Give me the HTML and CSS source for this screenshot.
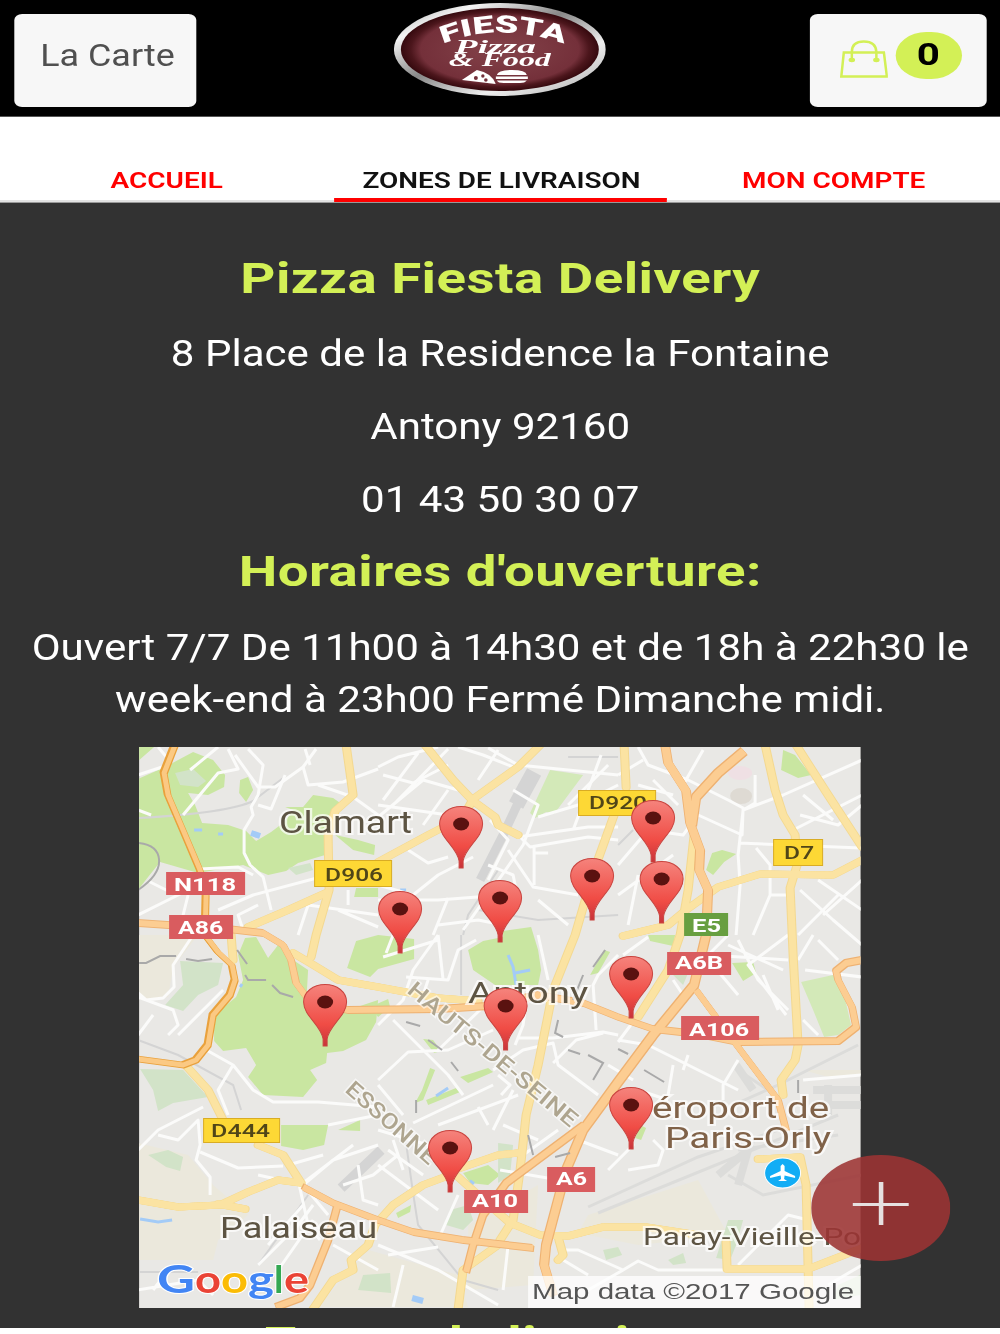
FILE: index.html
```html
<!DOCTYPE html>
<html lang="fr">
<head>
    <meta charset="UTF-8">
    <title>Pizza Fiesta Delivery</title>
    <link rel="stylesheet" href="styles.css">
</head>
<body>
<div class="page">
    <header class="topbar">
        <a class="btn btn-menu"><span>La Carte</span></a>
        <svg class="logo" viewBox="0 0 212 93" preserveAspectRatio="none">
            <defs>
                <linearGradient id="ring" x1="0" y1="0" x2="1" y2="1">
                    <stop offset="0" stop-color="#999"/>
                    <stop offset=".2" stop-color="#f4f4f4"/>
                    <stop offset=".45" stop-color="#888"/>
                    <stop offset=".7" stop-color="#eee"/>
                    <stop offset="1" stop-color="#aaa"/>
                </linearGradient>
                <radialGradient id="wine">
                    <stop offset="0" stop-color="#84434a"/>
                    <stop offset=".8" stop-color="#74303a"/>
                    <stop offset=".9" stop-color="#4c161c"/>
                    <stop offset="1" stop-color="#35090e"/>
                </radialGradient>
                <path id="arc" d="M49 41 Q106 17 176 43"/>
            </defs>
            <ellipse cx="106" cy="46.5" rx="106" ry="46.5" fill="url(#ring)"/>
            <ellipse cx="106" cy="46.5" rx="99" ry="41.5" fill="url(#wine)"/>
            <text class="logo-name"><textPath href="#arc" textLength="124" lengthAdjust="spacingAndGlyphs">FIESTA</textPath></text>
            <text class="logo-script" x="61" y="50" textLength="81" lengthAdjust="spacingAndGlyphs">Pizza</text>
            <text class="logo-script" x="55" y="63" textLength="102" lengthAdjust="spacingAndGlyphs">&amp; Food</text>
            <path d="M68 77 L83 67 Q98 70 102 81 Z" fill="#fff"/>
            <g fill="#74303a"><circle cx="82" cy="75" r="2"/><circle cx="89" cy="73" r="1.7"/><circle cx="92" cy="77" r="1.8"/></g>
            <path d="M103 72 Q104 67 118 67 T133 72 Z M102 73.500 H134 V76 H102 Z M103 77.500 H133 Q131 80 126 80 H110 Q104 80 103 77.500 Z" fill="#fff"/>
        </svg>
        <a class="btn btn-cart">
            <svg class="bag" viewBox="0 0 48 38" preserveAspectRatio="none">
                <path d="M4 12.500 H44 L47 36.500 H1.500 Z"/>
                <path d="M12 19 V12 Q12 1.500 24 1.500 T36.500 12 V19"/>
                <ellipse cx="12" cy="20" rx="2" ry="1"/>
                <ellipse cx="36.500" cy="20" rx="2" ry="1"/>
            </svg>
            <span class="count">0</span>
        </a>
    </header>

    <nav class="tabs">
        <a class="tab">ACCUEIL</a>
        <a class="tab active">ZONES DE LIVRAISON</a>
        <a class="tab">MON COMPTE</a>
    </nav>

    <main class="content">
        <h2>Pizza Fiesta Delivery</h2>
        <p>8 Place de la Residence la Fontaine</p>
        <p>Antony 92160</p>
        <p>01 43 50 30 07</p>
        <h2 class="hours">Horaires d'ouverture:</h2>
        <p>Ouvert 7/7 De 11h00 à 14h30 et de 18h à 22h30 le<br>week-end à 23h00 Fermé Dimanche midi.</p>

        <svg class="map" viewBox="1 2 722 561" preserveAspectRatio="none">
            <defs>
                <linearGradient id="red" x1="0" y1="0" x2="0" y2="1">
                    <stop offset="0" stop-color="#f5837c"/>
                    <stop offset=".65" stop-color="#f04c45"/>
                    <stop offset="1" stop-color="#c8333a"/>
                </linearGradient>
                <g id="pin">
                    <path d="M-2 62 V55 C-4 41 -21.500 32 -21.500 18 C-21.500 8 -12 .5 0 .5 S21.500 8 21.500 18 C21.500 32 4 41 2 55 V62 Z" fill="url(#red)" stroke="#c9443f"/>
                    <ellipse cx="0" cy="18" rx="8" ry="6.500" fill="#5a1210"/>
                </g>
            </defs>
            <rect width="724" height="564" fill="#e9e8e5"/>

            <!-- fields -->
            <g fill="#ebe8dc">
                <path d="M0 190 H60 L35 222 L30 252 L0 255 Z M0 398 L50 410 L75 440 L110 470 L80 495 L75 515 L0 515 Z"/>
                <path d="M180 562 L230 505 L320 530 L330 562 Z M330 480 L400 440 L395 540 L330 545 Z M450 470 L560 435 L590 490 L500 500 L440 488 Z M665 325 H724 V330 L690 332 Z"/>
            </g>

            <!-- woods and parks -->
            <g fill="#c9e6a1">
                <path d="M0 34 L27 22 L40 15 L55 7 L75 15 L87 30 L86 42 L70 50 L50 48 L57 60 L64 78 L90 80 L108 86 L118 96 L133 87 L145 78 L155 65 L147 62 L165 62 L175 50 L195 53 L205 60 L190 85 L187 110 L160 118 L148 126 L130 130 L105 120 L60 128 L22 117 L10 132 L0 145 Z"/>
                <path d="M0 2 H16 L0 16 Z M102 35 L110 32 L115 45 L108 57 L101 48 Z M197 90 L220 95 L237 100 L236 110 L215 105 Z M218 143 H240 V152 H216 Z"/>
                <path d="M645 5 L657 10 L673 30 L660 33 L643 25 Z M574 108 L584 105 L598 109 L586 117 L575 130 L568 125 Z"/>
                <path d="M107 193 L118 192 L130 213 L140 200 L155 215 L170 225 L168 260 L210 265 L240 255 L238 277 L228 295 L205 306 L189 308 L188 318 L172 325 L179 335 L165 352 L125 350 L110 332 L118 320 L108 303 L85 306 L76 296 L76 270 L98 252 L105 235 L100 210 Z"/>
                <path d="M218 196 L240 190 L276 194 V214 L240 224 L232 232 L209 223 Z M330 205 L345 196 L365 192 V186 L393 182 L400 205 L403 225 L400 240 H357 L335 225 Z"/>
                <path d="M285 294 L295 295 L303 306 L296 308 Z M292 323 L297 325 L285 355 L277 358 L284 345 Z M322 332 L350 323 L355 327 L330 338 Z M288 355 L318 343 L322 347 L290 360 Z M466 205 L472 207 L460 228 L452 230 Z M232 262 L250 254 L252 262 L240 272 Z"/>
                <path d="M510 190 H537 L535 201 L512 196 Z M594 218 L615 217 L618 228 L605 236 Z M143 380 H190 L186 400 L165 405 L143 401 Z M200 385 L222 375 V386 Z M325 428 L350 420 L362 430 L350 440 L332 438 Z M502 380 L508 383 L503 395 L497 393 Z M258 468 L273 460 L272 467 L260 473 Z"/>
            </g>
            <g fill="#d3e9b8">
                <path d="M412 25 L445 30 L416 69 L408 67 L397 73 L392 68 Z M663 237 L695 230 L706 250 L713 280 L700 290 L686 292 L675 265 Z"/>
            </g>
            <g fill="#d2e3c8">
                <path d="M37 28 L55 24 L68 36 L60 42 L42 40 Z M42 216 L85 218 L80 240 L60 250 L45 266 L27 260 L45 240 Z M2 324 L45 325 L70 352 L35 358 L20 366 L15 345 Z M10 410 L30 405 L45 412 L42 426 L28 422 Z"/>
                <path d="M225 530 L252 528 L253 548 L220 545 Z M312 465 L330 460 L335 475 L325 485 L308 480 Z M360 398 L375 400 L372 430 L360 438 Z M465 505 L480 502 L484 510 L468 515 Z M530 515 L545 508 L548 518 L535 520 Z M590 475 L605 475 L598 500 L592 515 L578 513 Z M535 230 L550 228 L545 240 Z M150 123 L172 118 L175 125 L158 130 Z M700 540 L722 530 V550 L695 555 Z"/>
            </g>

            <!-- water -->
            <g fill="none" stroke="#a3cbf7" stroke-width="3">
                <path d="M370 210 L375 222 L378 240 M377 228 L392 225 M298 351 L310 343 M2 474 L20 477 L34 475 M56 85 H64 M80 89 H85 M102 242 L104 239 M262 145 H268"/>
                <path d="M113 88 L122 91 M274 553 L285 556 M331 437 L335 440" stroke-width="6"/>
            </g>

            <!-- railways and airport -->
            <g fill="none" stroke="#d4d4d4">
                <path d="M0 73 Q90 68 115 56 L145 33 M430 12 H480 M0 295 L40 310 L95 340 L103 365 M360 125 L330 170 L325 190 M323 190 V250 M340 165 L400 175 L480 170" stroke-width="2"/>
                <path d="M268 398 Q275 450 280 480 L325 535 L360 545 M120 520 L170 450 M0 527 H60 M480 100 L495 85" stroke-width="2"/>
                <path d="M385 40 L380 58 L365 90 L342 135" stroke-width="9"/>
                <path d="M396 27 L378 60" stroke-width="16"/>
                <path d="M243 405 L203 443" stroke-width="10"/>
            </g>
            <g fill="none" stroke="#dcdcda">
                <path d="M450 462 L560 412 L640 385 M460 468 L700 370 M595 360 L640 340 L720 300 M600 325 L630 345 M590 430 L625 450 L724 430 M600 405 L700 390" stroke-width="3"/>
                <path d="M675 345 H724 M675 360 H724 M690 340 V370 M580 430 L610 405 L600 440 M598 320 L615 345" stroke-width="8"/>
            </g>
            <ellipse cx="602" cy="28" rx="12" ry="7" fill="#efe0e4"/>
            <ellipse cx="603" cy="51" rx="11" ry="8" fill="#dedad3"/>

            <!-- small streets -->
            <g class="street">
                <path d="M0 30 L24 22 M45 70 L80 28 L100 24 L90 4 M97 10 L120 42 L137 42 L165 22 L178 4 M110 4 L125 20 L120 50 L113 62 L115 70 L106 85 V108 L112 120 L125 132 L133 165 M20 2 L30 14 M52 25 L80 2"/>
                <path d="M120 60 L133 64 L147 30 M165 22 L170 40 L205 37 L240 24 M167 4 L172 20 M0 65 L13 70 M180 40 L215 52 L240 70 M62 124 L100 122 L115 130 M0 170 L30 155 L50 145 M50 150 L40 190 M10 136 L30 146 M80 165 L115 150 L190 130 M105 185 L100 170 L120 160"/>
                <path d="M210 145 V160 M160 190 L170 160 L240 170 M200 165 L240 182 M0 252 L35 265 L40 280 L30 290 M0 190 M40 290 L85 245 M55 190 L35 220 L36 242 L25 253 L8 255 L0 248 M15 270 L0 290"/>
                <path d="M70 306 L95 320 L115 345 L135 357 H180 L240 362 M95 320 L80 345 L90 370 M65 362 L20 385 L0 405 M20 390 L40 395 L60 375 L62 400 L58 415 L72 432 V450 M62 407 L100 423 L145 421 M190 380 L240 370 M160 435 L170 480 L182 495"/>
                <path d="M240 22 L260 12 L300 2 M245 55 L280 8 M255 60 L310 4 M240 72 L285 35 L320 45 M285 80 L310 45 M320 2 L345 10 L375 22 M350 3 L380 20 L480 30 M375 45 L400 60 L385 100 L325 185 M352 75 L370 95 L350 135"/>
                <path d="M378 88 L392 102 L450 92 L480 95 M400 72 L440 60 L480 40 M380 92 L450 82 H480 M463 10 L450 45 L435 85 M396 100 V140 M396 108 H410 M350 120 L375 130 L378 145 M370 105 L395 142 L440 150"/>
                <path d="M240 140 L275 150 L300 130 L335 112 M270 105 L290 118 L310 112 M240 155 H300 L365 150 M310 153 L295 190 M300 180 L340 175 L365 180 M400 155 L430 180 M240 60 L310 70 M245 30 L275 38 L310 20"/>
                <path d="M240 280 L265 255 L275 225 L300 190 M245 212 L300 195 M255 190 L248 208 M268 232 L310 235 L320 205 L338 195 M300 190 L305 235 M255 275 L310 330 L325 350 M290 235 L285 250 M240 335 L270 307 L310 305 L355 285 M240 340 L265 370 M300 305 L345 262"/>
                <path d="M355 325 L385 305 L415 298 L420 320 L440 335 L460 350 M363 350 L372 340 L360 330 M377 300 L385 280 L390 240 M380 293 H415 L465 287 L480 290 M415 318 L438 295 L465 288 M458 285 L455 240 L460 230 L480 210 M275 378 L355 340 M300 380 L380 350 M340 362 L350 380 M400 190 L410 235"/>
                <path d="M355 385 L375 345 M480 30 L505 15 M500 40 L535 50 M500 2 L510 20 L550 35 L590 55 L605 63 L604 90 L560 70 M515 35 L540 60 M565 5 L545 40 M600 98 L725 103 M605 65 L645 50 L724 15 M617 30 V58 L605 65 L600 110 L602 140 L598 190"/>
                <path d="M662 70 L700 80 L724 60 M665 50 L695 75 M618 103 L632 120 V150 L615 190 M632 150 H650 M662 145 L695 175 L724 200 M655 85 L724 50 M680 135 L724 165 M685 170 L724 135 M660 190 L700 150 M480 120 L510 85 L545 90 L560 70 M480 150 L535 110 M500 130 L490 180"/>
                <path d="M590 190 L570 210 L650 215 M650 190 L610 220 L648 270 M590 200 L645 225 M600 195 L620 235 L650 265 M667 225 L724 232 M675 190 L660 215 M665 275 L680 290 M625 230 L640 265 M680 195 L700 215 M562 205 L600 250"/>
                <path d="M480 295 L510 300 L570 330 L600 345 M550 310 L545 325 M535 320 L530 350 M600 315 L585 340 V355 M665 335 L724 330 M480 350 L500 345 L530 355 M500 365 L490 375 M470 320 L495 335 M485 210 L510 192 M480 297 L500 270 M535 235 L545 250"/>
                <path d="M0 545 L60 535 L75 550 M30 525 L15 545 M120 520 L160 480 L175 460 M140 525 L175 475 M120 430 L165 440 L190 470 M130 500 L165 460 M165 440 L195 415 L240 400 M185 410 L150 420 M165 438 L215 400 M240 420 L300 465 M250 405 L285 430 M220 420 L225 455 L240 460"/>
                <path d="M195 500 L240 525 M240 500 L300 525 L360 560 M265 520 L255 562 M250 510 L300 502 M320 450 L300 495 M240 385 L290 400 M255 395 L265 425 M205 440 L235 430 L260 410 M365 380 L400 395 M362 425 L450 440 M385 410 L420 385 M440 395 L480 410"/>
                <path d="M470 425 L495 400 L490 380 M490 425 L520 420 L525 405 L515 395 M425 505 L440 505 L485 525 L450 545 M365 545 L370 500 M480 528 L500 516 L520 525 L600 525 M425 515 L450 530 M600 520 L650 470 L670 475 M645 480 L655 495 L700 490 M690 540 L724 520 M340 35 L360 5 M430 60 L470 20"/>
            </g>

            <!-- main roads -->
            <g class="road">
                <path d="M287 0 L315 35 L335 56 L357 72 L360 80 L380 90 M402 0 L380 22 L335 54 L325 72 L290 90 L240 117 M208 0 L215 50 L197 66 L190 90 L191 145 L178 190 L173 212 M190 147 L150 165 L110 182"/>
                <path d="M476 70 L455 128 L437 190 L415 245 L400 320 L388 370 L382 425 L375 475 L362 495 M486 0 L488 42 M627 0 L637 45 L645 70 L657 90 L659 120 L652 143 L655 210 L660 300 L657 315 L643 335 L645 350 M658 0 L690 50 L724 102"/>
                <path d="M724 115 L695 130 L622 129 L580 142 L548 165 L530 180 L485 191 M556 90 L550 145 L542 190 L530 225 L500 272 M155 208 L172 218 L200 235 L240 242 L300 253 L340 256 M93 190 L95 215 M49 322 L70 345 L85 375"/>
                <path d="M120 400 L145 410 L163 438 L140 435 L110 447 L82 460 L40 462 L0 455 M80 459 L107 464 M312 430 L285 440 L255 460 L237 480 L230 500 L213 515 L215 525 L195 535 L175 564 M308 428 L360 410 L380 408 M320 432 L340 450 L372 478 L402 490 L430 491 L465 482 L508 482 L560 490"/>
                <path d="M620 414 L662 412 L668 440 L671 564 M588 497 L589 524 H670 L724 503 M420 492 L425 510 L420 515 M360 500 L325 525 L320 564"/>
            </g>
            <g class="highway">
                <path d="M527 0 L530 18 L548 46 L552 78 L562 105 L561 125 L570 145 L568 190 L556 240 L515 290 L480 337 L445 385 L428 425 L408 500 L406 520 L415 550 M606 6 L580 28 L558 52 L554 80" stroke-width="8"/>
                <path d="M0 178 L30 180 L90 184 L125 188 L145 200 L153 215 L158 238 L172 257 L210 265 L300 264 L350 261 L400 250 L445 258 L480 272 L515 284 L560 289 L600 297 L700 296 L718 282 L714 262 L700 235 L698 226 L708 218 L724 215" stroke-width="6"/>
                <path d="M558 245 L600 302 L640 355 L648 385 M446 380 L368 438 L345 470 L335 500 L328 527 M165 442 L195 458 L240 475 L275 487 L325 495 L395 503 M200 458 L190 495 L172 540 L162 553 L138 562" stroke-width="6"/>
            </g>
            <path class="highway bypass" d="M37 0 L26 28 L30 50 L45 85 L62 125 L68 150 L67 190 L80 207 L94 220 L97 235 L92 250 L75 270 L70 300 L58 315 L45 320 L0 314"/>
            <path d="M0 98 Q20 100 21 115 T0 145 M0 218 H8 L22 211 H38 M48 214 L60 216 L74 214 M99 205 L109 219 M107 230 L110 235 H128 M134 240 L142 248 L155 252 M420 275 L417 288 L425 292 M430 305 L442 309 M450 310 L465 318 L455 335 M467 205 L455 222 M445 230 L435 255 M268 277 L282 281 M290 295 L304 305 M313 317 L320 326 M278 355 V368 M506 325 L526 337 M480 304 L490 309 M660 335 V348 M390 390 L395 410 M417 412 L432 408" fill="none" stroke="#a9a9a9" stroke-width="2"/>

            <!-- place names -->
            <g class="place">
                <text x="141" y="88" font-size="31" textLength="133" lengthAdjust="spacingAndGlyphs">Clamart</text>
                <text x="330" y="258" font-size="29" textLength="120" lengthAdjust="spacingAndGlyphs">Antony</text>
                <text x="82" y="493" font-size="30" textLength="157" lengthAdjust="spacingAndGlyphs">Palaiseau</text>
                <text x="505" y="500" font-size="23" textLength="218" lengthAdjust="spacingAndGlyphs">Paray-Vieille-Po</text>
            </g>
            <g class="place airport">
                <text x="514" y="373" font-size="30" textLength="177" lengthAdjust="spacingAndGlyphs">éroport de</text>
                <text x="527" y="403" font-size="30" textLength="166" lengthAdjust="spacingAndGlyphs">Paris-Orly</text>
            </g>
            <g class="region">
                <text transform="translate(268 247) rotate(39.700)" textLength="213" lengthAdjust="spacingAndGlyphs">HAUTS-DE-SEINE</text>
                <text transform="translate(206 346) rotate(41.500)" textLength="113" lengthAdjust="spacingAndGlyphs">ESSONNE</text>
            </g>

            <!-- road shields -->
            <g class="shield yellow">
                <rect x="176.500" y="115.500" width="77" height="26"/><text x="187" y="136" textLength="58" lengthAdjust="spacingAndGlyphs">D906</text>
                <rect x="440.500" y="45.500" width="77" height="25"/><text x="451" y="64" textLength="58" lengthAdjust="spacingAndGlyphs">D920</text>
                <rect x="635.500" y="94.500" width="49" height="26"/><text x="646" y="114" textLength="30" lengthAdjust="spacingAndGlyphs">D7</text>
                <rect x="65.500" y="373.500" width="76" height="24"/><text x="73" y="392" textLength="59" lengthAdjust="spacingAndGlyphs">D444</text>
            </g>
            <g class="shield red">
                <rect x="28" y="127" width="79" height="23"/><text x="36" y="146" textLength="62" lengthAdjust="spacingAndGlyphs">N118</text>
                <rect x="31" y="170" width="64" height="24"/><text x="40" y="189" textLength="45" lengthAdjust="spacingAndGlyphs">A86</text>
                <rect x="529" y="207" width="64" height="23"/><text x="537" y="224" textLength="48" lengthAdjust="spacingAndGlyphs">A6B</text>
                <rect x="543" y="271" width="78" height="24"/><text x="551" y="291" textLength="60" lengthAdjust="spacingAndGlyphs">A106</text>
                <rect x="326" y="445" width="64" height="23"/><text x="334" y="462" textLength="46" lengthAdjust="spacingAndGlyphs">A10</text>
                <rect x="409" y="422" width="48" height="25"/><text x="418" y="440" textLength="31" lengthAdjust="spacingAndGlyphs">A6</text>
            </g>
            <g class="shield green">
                <rect x="546" y="168" width="44" height="23"/><text x="554" y="187" textLength="29" lengthAdjust="spacingAndGlyphs">E5</text>
            </g>
            <ellipse cx="644.500" cy="428" rx="18" ry="15" fill="#12adf5" stroke="#fff"/>
            <path d="M644.500 419 L646.500 421 V426 L657 431 V433 L646.500 430.500 L646 434 L649 436 H640 L643 434 L642.500 430.500 L632 433 V431 L642.500 426 V421 Z" fill="#fff"/>

            <use href="#pin" x="323" y="61"/>
            <use href="#pin" x="515" y="55"/>
            <use href="#pin" x="454" y="113"/>
            <use href="#pin" x="523.500" y="116"/>
            <use href="#pin" x="362" y="135"/>
            <use href="#pin" x="262" y="146"/>
            <use href="#pin" x="187" y="239"/>
            <use href="#pin" x="367.500" y="243"/>
            <use href="#pin" x="493" y="211"/>
            <use href="#pin" x="493" y="342"/>
            <use href="#pin" x="312" y="385"/>

            <text class="google" y="548">
                <tspan x="19" fill="#4285f4" textLength="38" lengthAdjust="spacingAndGlyphs">G</tspan><tspan x="57" fill="#ea4335" textLength="26" lengthAdjust="spacingAndGlyphs">o</tspan><tspan x="83" fill="#fbbc05" textLength="27" lengthAdjust="spacingAndGlyphs">o</tspan><tspan x="110" fill="#4285f4" textLength="26" lengthAdjust="spacingAndGlyphs">g</tspan><tspan x="136" fill="#34a853">l</tspan><tspan x="146" fill="#ea4335" textLength="25" lengthAdjust="spacingAndGlyphs">e</tspan>
            </text>
            <rect x="390" y="531" width="334" height="33" fill="#fff" fill-opacity=".75"/>
            <text class="credit" x="394" y="554" textLength="322" lengthAdjust="spacingAndGlyphs">Map data ©2017 Google</text>
        </svg>

        <h2 class="zones">Zones de livraison:</h2>
    </main>

    <a class="fab"></a>
</div>
</body>
</html>
```
FILE: styles.css
```css
html * {
    box-sizing: border-box;
}

body {
    margin: 0;
    background: #fff;
    font-family: Roboto, sans-serif;
    overflow: hidden;
}

/* wide pixels: everything is drawn 1.3 times wider than tall */
.page {
    position: relative;
    width: 769.600px;
    height: 1334px;
    transform: scaleX(1.3);
    transform-origin: 0 0;
}

.topbar {
    display: flex;
    justify-content: space-between;
    height: 117px;
    padding: 3px 11px 0;
    background: #000;
    border-bottom: 1px solid #555;
}

.btn {
    display: flex;
    height: 93px;
    margin-top: 11px;
    border-radius: 6px;
    background: #f7f7f7;
}

.btn-menu {
    width: 140px;
    padding-left: 19.500px;
    color: #505050;
    font-size: 31px;
    line-height: 84px;
    white-space: nowrap;
}

.btn-menu span {
    transform: scaleX(.89);
    transform-origin: 0 0;
}

.btn-cart {
    width: 136px;
    padding: 18px 0 0 23px;
    gap: 6px;
}

.logo {
    width: 163px;
    height: 93px;
    margin-left: -4px;
}

.logo-name {
    fill: #fff;
    font-size: 24px;
    font-weight: 900;
}

.logo-script {
    fill: #fff;
    font: italic bold 18px "Liberation Serif", serif;
}

.bag {
    width: 37px;
    height: 38px;
    margin-top: 8px;
    fill: none;
    stroke: #d3f056;
    stroke-width: 2.500;
}

.count {
    width: 51px;
    height: 47px;
    border-radius: 24px;
    background: #d3f056;
    color: #000;
    font-size: 31px;
    font-weight: 700;
    line-height: 46px;
    text-align: center;
}

.tabs {
    display: grid;
    grid-template-columns: repeat(3, 1fr);
    height: 86px;
    background: #fff;
    border-bottom: 1px solid #999;
}

.tab {
    padding-top: 50px;
    border-bottom: 2px solid #e2e2e2;
    color: #f00;
    font-size: 21.500px;
    font-weight: 600;
    line-height: 28px;
    text-align: center;
    white-space: nowrap;
}

.tab.active {
    padding-left: 2px;
    border-bottom: 4px solid #f00;
    color: #111;
}

.content {
    height: 1125px;
    padding-top: 47.500px;
    background: #323232;
    color: #fff;
    text-align: center;
    overflow: hidden;
}

h2 {
    margin: 0;
    color: #d3f056;
    font-size: 42px;
    font-weight: 700;
    letter-spacing: .37px;
    line-height: 56px;
    white-space: nowrap;
}

p {
    margin: 21.300px -40px 0;
    font-size: 36px;
    line-height: 52px;
    white-space: nowrap;
    transform: scaleX(.899);
}

.hours {
    margin-top: 18px;
}

.map {
    display: block;
    width: 555.400px;
    height: 561px;
    margin: 21px auto 0;
}

.zones {
    margin-top: 7px;
}

.street {
    fill: none;
    stroke: #fbfbfa;
    stroke-width: 3;
    stroke-linejoin: round;
}

.road {
    fill: none;
    stroke: #fbe3a2;
    stroke-width: 7;
    stroke-linejoin: round;
    stroke-linecap: round;
    filter: drop-shadow(1px 0 0 #f3d890) drop-shadow(-1px 0 0 #f3d890);
}

.highway {
    fill: none;
    stroke: #fccd92;
    stroke-linejoin: round;
    filter: drop-shadow(1px 1px 0 #eeb171) drop-shadow(-1px -1px 0 #eeb171);
}

.bypass {
    stroke: #fbc983;
    stroke-width: 5;
    filter: drop-shadow(1.500px 1px 0 #e9a13c) drop-shadow(-1.500px -1px 0 #e9a13c);
}

.place text {
    fill: #5d5443;
    stroke: #fff;
    stroke-opacity: .7;
    stroke-width: 4;
    paint-order: stroke;
}

.airport text {
    fill: #806248;
}

.region text {
    fill: #aea58f;
    stroke: #fff;
    stroke-opacity: .6;
    stroke-width: 3;
    paint-order: stroke;
    font-size: 22px;
    font-weight: 500;
}

.shield text {
    fill: #fff;
    font-size: 18px;
    font-weight: 700;
}

.shield.yellow rect {
    fill: #fdd835;
    stroke: #d9ac24;
}

.shield.yellow text {
    fill: #504618;
    font-weight: 500;
}

.shield.red rect {
    fill: #d95c5f;
}

.shield.green rect {
    fill: #689f40;
}

.google {
    font-family: Lato, sans-serif;
    font-size: 38px;
    font-weight: 700;
    stroke: #fff;
    stroke-width: 2;
    paint-order: stroke;
}

.credit {
    fill: #555;
    font-family: "Liberation Sans", sans-serif;
    font-size: 22.500px;
}

.fab {
    position: absolute;
    top: 1155px;
    left: 624px;
    width: 106.500px;
    height: 106px;
    border-radius: 50%;
    background:
        linear-gradient(#e6e0e0, #e6e0e0) 32px 48px / 43px 3px no-repeat,
        linear-gradient(#e6e0e0, #e6e0e0) 51.500px 27px / 3.500px 43px no-repeat,
        rgba(156, 51, 51, .88);
}
```
